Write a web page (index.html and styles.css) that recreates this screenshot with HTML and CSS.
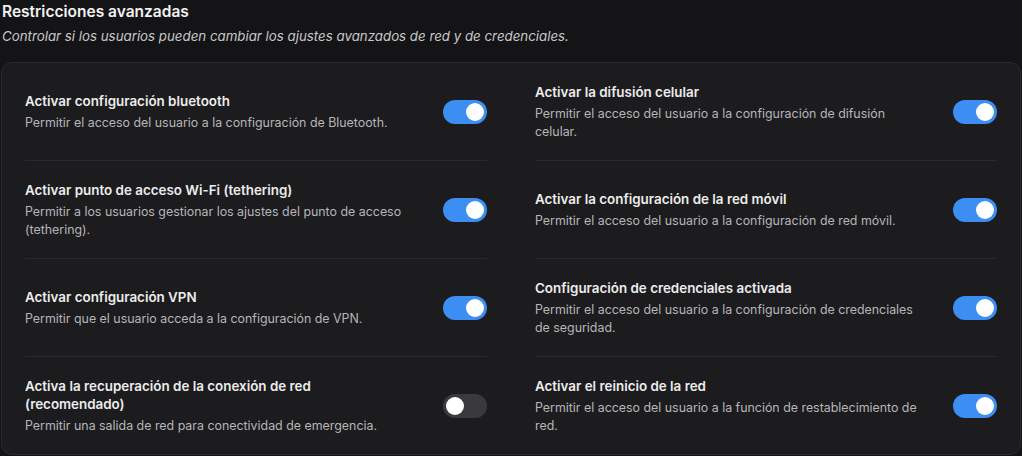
FILE: index.html
```html
<!DOCTYPE html>
<html lang="es">
<head>
<meta charset="utf-8">
<link rel="stylesheet" href="styles.css">
</head>
<body>
<section class="section">
  <h2 class="title">Restricciones avanzadas</h2>
  <p class="subtitle">Controlar si los usuarios pueden cambiar los ajustes avanzados de red y de credenciales.</p>
  <div class="card">
    <div class="col">
      <div class="row">
        <div class="text">
          <div class="label">Activar configuración bluetooth</div>
          <div class="desc">Permitir el acceso del usuario a la configuración de Bluetooth.</div>
        </div>
        <span class="toggle on"><span class="knob"></span></span>
      </div>
      <div class="row">
        <div class="text">
          <div class="label">Activar punto de acceso Wi-Fi (tethering)</div>
          <div class="desc">Permitir a los usuarios gestionar los ajustes del punto de acceso (tethering).</div>
        </div>
        <span class="toggle on"><span class="knob"></span></span>
      </div>
      <div class="row">
        <div class="text">
          <div class="label">Activar configuración VPN</div>
          <div class="desc">Permitir que el usuario acceda a la configuración de VPN.</div>
        </div>
        <span class="toggle on"><span class="knob"></span></span>
      </div>
      <div class="row">
        <div class="text">
          <div class="label">Activa la recuperación de la conexión de red (recomendado)</div>
          <div class="desc">Permitir una salida de red para conectividad de emergencia.</div>
        </div>
        <span class="toggle"><span class="knob"></span></span>
      </div>
    </div>
    <div class="col">
      <div class="row">
        <div class="text">
          <div class="label">Activar la difusión celular</div>
          <div class="desc">Permitir el acceso del usuario a la configuración de difusión celular.</div>
        </div>
        <span class="toggle on"><span class="knob"></span></span>
      </div>
      <div class="row">
        <div class="text">
          <div class="label">Activar la configuración de la red móvil</div>
          <div class="desc">Permitir el acceso del usuario a la configuración de red móvil.</div>
        </div>
        <span class="toggle on"><span class="knob"></span></span>
      </div>
      <div class="row">
        <div class="text">
          <div class="label">Configuración de credenciales activada</div>
          <div class="desc">Permitir el acceso del usuario a la configuración de credenciales<br>de seguridad.</div>
        </div>
        <span class="toggle on"><span class="knob"></span></span>
      </div>
      <div class="row">
        <div class="text">
          <div class="label">Activar el reinicio de la red</div>
          <div class="desc">Permitir el acceso del usuario a la función de restablecimiento de red.</div>
        </div>
        <span class="toggle on"><span class="knob"></span></span>
      </div>
    </div>
  </div>
</section>
</body>
</html>
```

FILE: styles.css
```css
html, body {
  margin: 0;
  padding: 0;
  background: #141416;
  font-family: Inter, "Noto Sans", "Liberation Sans", sans-serif;
  color: #ececec;
}
.section {
  padding: 2px 1px 0 1px;
}
.title {
  margin: 0 0 0 1px;
  font-size: 15.5px;
  font-weight: 600;
  line-height: 20px;
  color: #f2f2f2;
}
.subtitle {
  margin: 5px 0 0 1px;
  font-size: 13.3px;
  font-style: italic;
  line-height: 18px;
  color: #c8c8ca;
}
.card {
  margin-top: 17px;
  background: #1c1c1e;
  border: 1px solid #2a2a2d;
  border-radius: 11px;
  display: grid;
  grid-template-columns: 1fr 1fr;
  column-gap: 48px;
  padding: 0 23px;
  height: 393px;
  box-sizing: border-box;
}
.col {
  display: flex;
  flex-direction: column;
}
.row {
  height: 98px;
  display: flex;
  align-items: center;
  justify-content: space-between;
  gap: 24px;
  border-bottom: 1px solid #2a2a2d;
  box-sizing: border-box;
}
.row:last-child {
  border-bottom: none;
  height: 97px;
}
.text {
  flex: 1;
  max-width: 386px;
}
.label {
  font-size: 13.4px;
  font-weight: 600;
  line-height: 18px;
  color: #ececec;
}
.desc {
  margin-top: 4px;
  font-size: 12.4px;
  line-height: 18px;
  color: #b6b6ba;
}
.toggle {
  flex: none;
  width: 44px;
  height: 24px;
  border-radius: 12px;
  background: #3a3a3d;
  position: relative;
}
.toggle.on {
  background: #3d8ef2;
}
.knob {
  position: absolute;
  top: 3px;
  left: 3px;
  width: 18px;
  height: 18px;
  border-radius: 50%;
  background: #ffffff;
}
.toggle.on .knob {
  left: 23px;
}
```
